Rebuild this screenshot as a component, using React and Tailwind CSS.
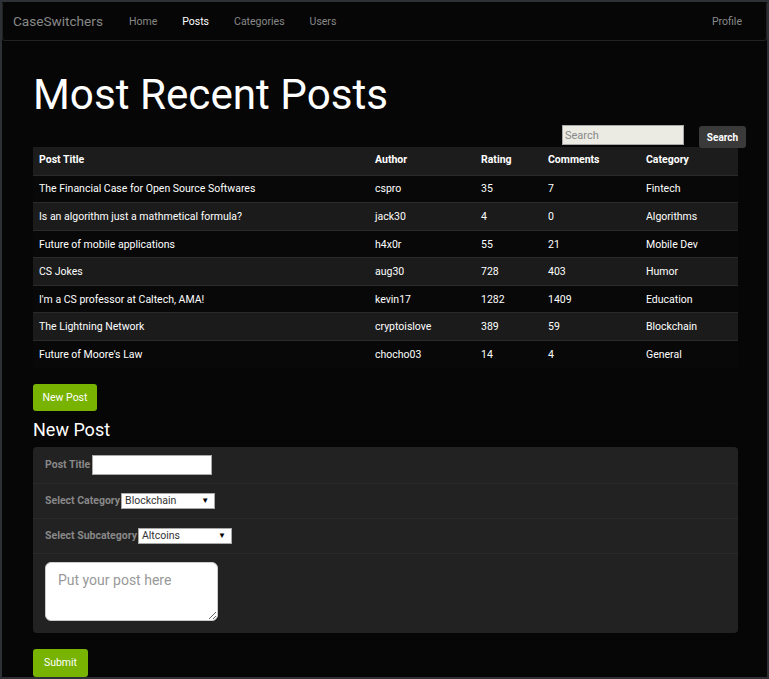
import React from "react";

const rows = [
  ["The Financial Case for Open Source Softwares", "cspro", "35", "7", "Fintech"],
  ["Is an algorithm just a mathmetical formula?", "jack30", "4", "0", "Algorithms"],
  ["Future of mobile applications", "h4x0r", "55", "21", "Mobile Dev"],
  ["CS Jokes", "aug30", "728", "403", "Humor"],
  ["I'm a CS professor at Caltech, AMA!", "kevin17", "1282", "1409", "Education"],
  ["The Lightning Network", "cryptoislove", "389", "59", "Blockchain"],
  ["Future of Moore's Law", "chocho03", "14", "4", "General"],
];

function Caret() {
  return <span className="text-[8px] text-black leading-none">▼</span>;
}

export default function App() {
  return (
    <div
      className="h-[679px] w-[769px] overflow-hidden border-2 border-[#2d3135] bg-[#060606] text-white"
      style={{ fontFamily: "Roboto, 'Liberation Sans', sans-serif" }}
    >
      {/* navbar */}
      <nav className="flex h-[39px] items-center rounded-[3px] border border-[#222] border-t-0 bg-[#060606] pl-[10px] pr-[24px] pt-[1px]">
        <span className="text-[13.6px] text-[#888]">CaseSwitchers</span>
        <div className="ml-[26px] flex items-center gap-[25px] text-[10.5px] text-[#888]">
          <span>Home</span>
          <span className="text-white">Posts</span>
          <span>Categories</span>
          <span>Users</span>
        </div>
        <span className="ml-auto text-[10.5px] text-[#888]">Profile</span>
      </nav>

      <main className="pl-[31px]">
        <h1 className="mt-[30px] text-[42.2px] leading-[48px] font-normal">Most Recent Posts</h1>

        <div className="mt-[7px] flex w-[713px] items-start justify-end gap-[15px]">
          <input
            placeholder="Search"
            className="mt-[-1px] h-[20px] w-[122px] border border-[#a9a9a9] bg-[#ebebe4] px-[2px] text-[11px] text-black placeholder:text-[#888] outline-none"
          />
          <button className="h-[22px] w-[47px] rounded-[3px] bg-[#3a3a3a] text-[10px] font-bold text-white">
            Search
          </button>
        </div>

        <table className="mt-[-1px] w-[705px] table-fixed border-collapse text-[10.5px]">
          <colgroup>
            <col className="w-[336px]" />
            <col className="w-[106px]" />
            <col className="w-[67px]" />
            <col className="w-[98px]" />
            <col className="w-[98px]" />
          </colgroup>
          <thead>
            <tr className="h-[28px] bg-[#1c1c1c] font-bold">
              <th className="pl-[6px] pb-[1px] text-left font-bold">Post Title</th>
              <th className="pl-[6px] pb-[1px] text-left font-bold">Author</th>
              <th className="pl-[6px] pb-[1px] text-left font-bold">Rating</th>
              <th className="pl-[6px] pb-[1px] text-left font-bold">Comments</th>
              <th className="pl-[6px] pb-[1px] text-left font-bold">Category</th>
            </tr>
          </thead>
          <tbody>
            {rows.map((r, i) => (
              <tr
                key={i}
                className={`h-[27.6px] border-t border-[#2a2a2a] ${i % 2 === 0 ? "bg-[#080808]" : "bg-[#1b1b1b]"}`}
              >
                {r.map((c, j) => (
                  <td key={j} className="pl-[6px] pt-[1px] text-left">
                    {c}
                  </td>
                ))}
              </tr>
            ))}
          </tbody>
        </table>

        <button className="mt-[16px] h-[27px] w-[64px] rounded-[3px] bg-[#77b300] text-[10.5px] text-white">
          New Post
        </button>

        <h2 className="mt-[8px] text-[18px] leading-[22px] font-normal">New Post</h2>

        <div className="mt-[6px] w-[705px] rounded-[4px] bg-[#222]">
          <div className="flex h-[37px] items-center border-b border-[#2a2a2a] pl-[12px]">
            <span className="text-[10.5px] font-bold text-[#888]">Post Title</span>
            <input className="ml-[2px] h-[20px] w-[120px] border border-[#a9a9a9] bg-white outline-none" />
          </div>
          <div className="flex h-[35px] items-center border-b border-[#2a2a2a] pl-[12px]">
            <span className="text-[10.5px] font-bold text-[#888]">Select Category</span>
            <div className="ml-[1px] flex h-[16px] w-[94px] items-center justify-between border border-[#a9a9a9] bg-white pl-[3px] pr-[5px] text-[10.5px] text-[#333]">
              <span>Blockchain</span>
              <Caret />
            </div>
          </div>
          <div className="flex h-[35px] items-center border-b border-[#2a2a2a] pl-[12px]">
            <span className="text-[10.5px] font-bold text-[#888]">Select Subcategory</span>
            <div className="ml-[1px] flex h-[16px] w-[94px] items-center justify-between border border-[#a9a9a9] bg-white pl-[3px] pr-[5px] text-[10.5px] text-[#333]">
              <span>Altcoins</span>
              <Caret />
            </div>
          </div>
          <div className="px-[12px] pt-[8px] pb-[12px]">
            <textarea
              placeholder="Put your post here"
              className="block h-[59px] w-[173px] rounded-[6px] border border-[#ccc] bg-white px-[12px] py-[7px] text-[14px] text-black placeholder:text-[#999] outline-none"
            />
          </div>
        </div>

        <button className="mt-[16px] h-[28px] w-[55px] rounded-[3px] bg-[#77b300] text-[10.5px] text-white">
          Submit
        </button>
      </main>
    </div>
  );
}
